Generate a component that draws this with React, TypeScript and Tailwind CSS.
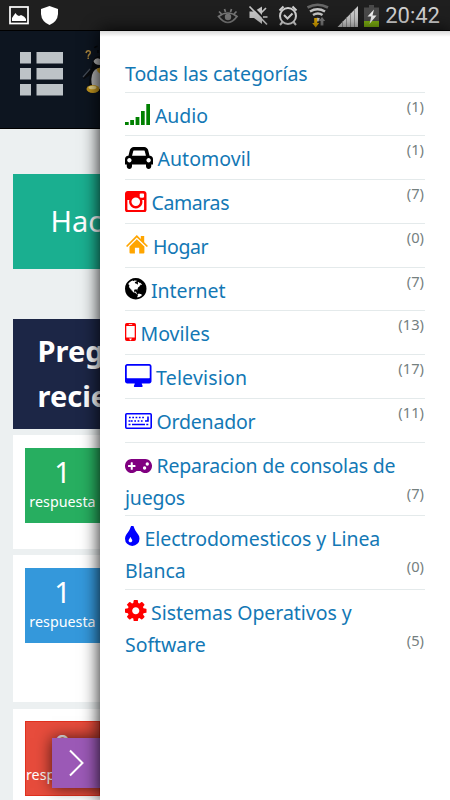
import React from 'react';
import { FaGamepad } from 'react-icons/fa';

interface Category {
  name: string;
  count: number;
  icon: React.ReactNode;
  tall?: boolean;
  tracking: string;
}

const SignalIcon = () => (
  <svg viewBox="0 0 25 21" className="mr-[5px] inline h-[21px] w-[25px] align-[-2px] text-[#008000]" fill="currentColor">
    <path d="M0 18h3.7v3H0zM5.2 16h3.8v5H5.2zM10.6 13h3.8v8h-3.8zM16 7h3.7v14H16zM21.3 0H25v21h-3.7z" />
  </svg>
);

const CarIcon = () => (
  <svg viewBox="0 128 2048 1600" className="mr-[4.5px] inline h-[22px] w-[28px] align-[-3px] text-black" fill="currentColor">
    <path d="M480 1088q0-66-47-113t-113-47-113 47-47 113 47 113 113 47 113-47 47-113zm36-320h1016l-89-357q-2-8-14-17.5t-21-9.5h-768q-9 0-21 9.5t-14 17.5zm1372 320q0-66-47-113t-113-47-113 47-47 113 47 113 113 47 113-47 47-113zm160-96v384q0 14-9 23t-23 9h-96v128q0 80-56 136t-136 56-136-56-56-136v-128h-1024v128q0 80-56 136t-136 56-136-56-56-136v-128h-96q-14 0-23-9t-9-23v-384q0-93 65.5-158.5t158.5-65.5h28l105-419q23-94 104-157.5t179-63.5h768q98 0 179 63.5t104 157.5l105 419h28q93 0 158.5 65.5t65.5 158.5z" />
  </svg>
);

const CameraIcon = () => (
  <svg viewBox="128 128 1536 1536" className="mr-[5px] inline h-[21.5px] w-[21.5px] align-[-2px] text-[#ff0000]" fill="currentColor">
    <path d="M1490 1426v-648h-135q20 63 20 131 0 126-64 232.5t-174 168.5-240 62q-197 0-337-135.5t-140-327.5q0-68 20-131h-141v648q0 26 17.5 43.5t43.5 17.5h1069q25 0 43-17.5t18-43.5zm-284-533q0-124-90.5-211.5t-218.5-87.5q-127 0-217.5 87.5t-90.5 211.5 90.5 211.5 217.5 87.5q128 0 218.5-87.5t90.5-211.5zm284-360v-165q0-28-20-48.5t-49-20.5h-174q-29 0-49 20.5t-20 48.5v165q0 29 20 49t49 20h174q29 0 49-20t20-49zm174-208v1142q0 81-58 139t-139 58h-1142q-81 0-139-58t-58-139v-1142q0-81 58-139t139-58h1142q81 0 139 58t58 139z" />
  </svg>
);

const HomeIcon = () => (
  <svg viewBox="0 0 23 19" className="mr-[5px] inline h-[19px] w-[23px] align-baseline text-[#ffa500]" fill="currentColor">
    <path d="M11.8 0L15.8 3.9V1h3.4v6.2L23 10.9l-1.2 1.2-10-9.7-9.6 9.7L1 10.9z" />
    <path d="M11.8 4.2l7.6 7.4v6q0 1-1 1h-4.2v-5.9h-4.3v5.9H5.5q-1 0-1-1v-6z" />
  </svg>
);

const GlobeIcon = () => (
  <svg viewBox="128 128 1536 1536" className="mr-[4.5px] inline h-[21.5px] w-[21.5px] align-[-2px] text-black" fill="currentColor">
    <path d="M896 128q209 0 385.5 103t279.5 279.5 103 385.5-103 385.5-279.5 279.5-385.5 103-385.5-103-279.5-279.5-103-385.5 103-385.5 279.5-279.5 385.5-103zm274 521q-2 1-9.5 9.5t-13.5 9.5q2 0 4.5-5t5-11 3.5-7q6-7 22-15 14-6 52-12 34-8 51 11-2-2 9.5-13t14.5-12q3-2 15-4.5t15-7.5l2-22q-12 1-17.5-7t-6.5-21q0 2-6 8 0-7-4.5-8t-11.5 1-9 1q-10-3-15-7.5t-8-16.5-4-15q-2-5-9.5-11t-9.5-10q-1-2-2.5-5.5t-3-6.5-4-5.5-5.5-2.5-7 5-7.5 10-4.5 5q-3-2-6-1.5t-4.5 1-4.5 3-5 3.500q-3 2-8.500 3t-8.500 2q15-5-1-11-10-4-16-3 9-4 7.500-12t-8.500-14h5q-1-4-8.500-8.500t-17.500-8.500-13-6q-8-5-34-9.500t-33-.5q-5 6-4.500 10.500t4 14 3.500 12.500q1 6-5.500 13t-6.500 12q0 7 14 15.500t10 21.500q-3 8-16 16t-16 12q-5 8-1.500 18.500t10.500 16.500q2 2 1.500 4t-3.500 4.500-5.500 4-6.500 3.500l-3 2q-11 5-20.500-6t-13.500-26q-7-25-16-30-23-8-29 1-5-13-41-26-25-9-58-4 6-1 0-15-7-15-19-12 3-6 4-17.500t1-13.500q3-13 12-23 1-1 7-8.500t9.500-13.500.5-6q35 4 50-11 5-5 11.500-17t10.500-17q9-6 14-5.500t14.500 5.500 14.500 5q14 1 15.500-11t-7.500-20q12 1 3-17-4-7-8-9-12-4-27 5-8 4 2 8-1-1-9.500 10.500t-16.500 17.500-16-5q-1-1-5.500-13.500t-9.500-13.500q-8 0-16 15 3-8-11-15t-24-8q19-12-8-27-7-4-20.500-5t-19.500 4q-5 7-5.500 11.500t5 8 10.500 5.500 11.500 4 8.500 3q14 10 8 14-2 1-8.500 3.500t-11.500 4.500-6 4q-3 4 0 14t-2 14q-5-5-9-17.500t-7-16.500q7 9-25 6l-10-1q-4 0-16 2t-20.500 1-13.500-8q-4-8 0-20 1-4 4-2-4-3-11-9.500t-10-8.500q-46 15-94 41 6 1 12-1 5-2 13-6.500t10-5.500q34-14 42-7l5-5q14 16 20 25-7-4-30-1-20 6-22 12 7 12 5 18-4-3-11.500-10t-14.500-11-15-5q-16 0-22 1-146 80-235 222 7 7 12 8 4 1 5 9t2.500 11 11.500-3q9 8 3 19 1-1 44 27 19 17 21 21 3 11-10 18-1-2-9-9t-9-4q-3 5 .5 18.500t10.500 12.500q-7 0-9.500 16t-2.500 35.500-1 23.500l2 1q-3 12 5.500 34.500t21.500 19.500q-13 3 20 43 6 8 8 9 3 2 12 7.500t15 10 10 10.500q4 5 10 22.500t14 23.500q-2 6 9.500 20t10.500 23q-1 0-2.500 1t-2.500 1q3 7 15.500 14t15.500 13q1 3 2 10t3 11 8 2q2-20-24-62-15-25-17-29-3-5-5.500-15.500t-4.500-14.500q2 0 6 1.500t8.500 3.500 7.500 4 2 3q-3 7 2 17.500t12 18.500 17 19 12 13q6 6 14 19.500t0 13.500q9 0 20 10.500t17 19.500q5 8 8 26t5 24q2 7 8.500 13.500t12.500 9.500l16 8 13 7q5 2 18.500 10.500t21.500 11.500q10 4 16 4t14.500-2.500 13.500-3.500q15-2 29 15t21 21q36 19 55 11-2 1 .5 7.500t8 15.500 9 14.500 5.500 8.500q5 6 18 15t18 15q6-4 7-9-3 8 7 20t18 10q14-3 14-32-31 15-49-18 0-1-2.500-5.500t-4-8.500-2.500-8.500 0-7.500 5-3q9 0 10-3.500t-2-12.500-4-13q-1-8-11-20t-12-15q-5 9-16 8t-16-9q0 1-1.500 5.500t-1.500 6.500q-13 0-15-1 1-3 2.500-17.500t3.500-22.500q1-4 5.500-12t7.500-14.500 4-12.500-4.500-9.500-17.500-2.500q-19 1-26 20-1 3-3 10.500t-5 11.500-9 7q-7 3-24 2t-24-5q-13-8-22.500-29t-9.500-37q0-10 2.500-26.500t3-25-5.500-24.500q3-2 9-9.500t10-10.500q2-1 4.500-1.500t4.500 0 4-1.500 3-6q-1-1-4-3-3-3-4-3 7 3 28.500-1.500t27.500 1.500q15 11 22-2 0-1-2.500-9.500t-.5-13.500q5 27 29 9 3 3 15.500 5t17.500 5q3 2 7 5.500t5.500 4.500 5-.5 8.500-6.500q10 14 12 24 11 40 19 44 7 3 11 2t4.500-9.500 0-14-1.500-12.500l-1-8v-18l-1-8q-15-3-18.500-12t1.500-18.500 15-18.500q1-1 8-3.500t15.500-6.500 12.500-8q21-19 15-35 7 0 11-9-1 0-5-3t-7.500-5-4.500-2q9-5 2-16 5-3 7.500-11t7.500-10q9 12 21 2 8-8 1-16 5-7 20.500-10.500t18.500-9.500q7 2 8-2t1-12 3-12q4-5 15-9t13-5l17-11q3-4 0-4 18 2 31-11 10-11-6-20 3-6-3-9.500t-15-5.500q3-1 11.500-.5t10.500-1.500q15-10-7-16-17-5-43 12zm-163 877q206-36 351-189-3-3-12.500-4.500t-12.500-3.500q-18-7-24-8 1-7-2.500-13t-8-9-12.500-8-11-7q-2-2-7-6t-7-5.500-7.500-4.500-8.500-2-10 1l-3 1q-3 1-5.500 2.500t-5.500 3-4 3 0 2.500q-21-17-36-22-5-1-11-5.500t-10.500-7-10-1.500-11.500 7q-5 5-6 15t-2 13q-7-5 0-17.500t2-18.500q-3-6-10.500-4.500t-12 4.500-11.500 8.500-9 6.500-8.500 5.500-8.500 7.500q-3 4-6 12t-5 11q-2-4-11.500-6.500t-9.500-5.500q2 10 4 35t5 38q7 31-12 48-27 25-29 40-4 22 12 26 0 7-8 20.500t-7 21.500q0 6 2 16z" />
  </svg>
);

const MobileIcon = () => (
  <svg viewBox="0 0 11 18" className="mr-[4.5px] inline h-[18px] w-[11px] align-baseline text-[#ff0000]" fill="currentColor" fillRule="evenodd">
    <path d="M1.8 0h7.4Q11 0 11 1.8v14.4Q11 18 9.2 18H1.8Q0 18 0 16.2V1.8Q0 0 1.8 0zM1.3 3v11.6h8.4V3zM3.8 1.2v.8h3.4v-.8zM4.3 15.6v1h.7v.7h1v-.7h.7v-1z" />
  </svg>
);

const DesktopIcon = () => (
  <svg viewBox="-64 0 1920 1664" className="mr-[4.5px] inline h-[23px] w-[26.5px] align-[-2px] text-[#0000ff]" fill="currentColor">
    <path d="M1728 992v-832q0-13-9.5-22.5t-22.5-9.5h-1600q-13 0-22.5 9.5t-9.5 22.5v832q0 13 9.5 22.5t22.5 9.5h1600q13 0 22.5-9.5t9.5-22.5zm128-832v1088q0 66-47 113t-113 47h-544q0 37 16 77.5t32 71 16 43.5q0 26-19 45t-45 19h-512q-26 0-45-19t-19-45q0-14 16-44t32-70 16-78h-544q-66 0-113-47t-47-113v-1088q0-66 47-113t113-47h1600q66 0 113 47t47 113z" />
  </svg>
);

const KeyboardIcon = () => (
  <svg viewBox="0 0 27 16" className="mr-[4.5px] inline h-[16px] w-[27px] align-baseline text-[#0000ff]" fill="none" stroke="currentColor">
    <rect x="0.8" y="0.8" width="25.4" height="14.4" rx="1" strokeWidth="1.6" />
    <path d="M4 4.5h16.5M6 8h13" strokeWidth="1.6" strokeDasharray="1.7 1.6" />
    <path d="M3.5 8h2M20 8h3V3.6M3.5 11.5h2M7 11.5h13M21.3 11.5h2" strokeWidth="1.6" />
  </svg>
);

const GamepadIcon = () => (
  <FaGamepad viewBox="0 96 640 320" preserveAspectRatio="none" className="mr-[4.5px] inline h-[14px] w-[27px] align-baseline text-[#800080]" />
);

const TintIcon = () => (
  <svg viewBox="384 128 1024 1408" className="mr-[5px] inline h-[20px] w-[14.5px] align-baseline text-[#0000ff]" fill="currentColor">
    <path d="M896 1152q0-36-20-69-1-1-15.5-22.5t-25.5-38-25-44-21-50.5q-4-16-21-16t-21 16q-7 23-21 50.5t-25 44-25.5 38-15.5 22.5q-20 33-20 69 0 53 37.5 90.5t90.5 37.5 90.5-37.5 37.5-90.5zm512-128q0 212-150 362t-362 150-362-150-150-362q0-145 81-275 6-9 62.5-90.5t101-151 99.5-178 83-201.5q9-30 34-47t51-17 51.5 17 33.5 47q28 93 83 201.5t99.5 178 101 151 62.5 90.5q81 127 81 275z" />
  </svg>
);

const CogIcon = () => (
  <svg viewBox="128 128 1536 1536" className="mr-[4.5px] inline h-[21.5px] w-[21.5px] align-[-1.5px] text-[#ff0000]" fill="currentColor">
    <path d="M1152 896q0-106-75-181t-181-75-181 75-75 181 75 181 181 75 181-75 75-181zm512-109v222q0 12-8 23t-20 13l-185 28q-19 54-39 91 35 50 107 138 10 12 10 25t-9 23q-27 37-99 108t-94 71q-12 0-26-9l-138-108q-44 23-91 38-16 136-29 186-7 28-36 28h-222q-14 0-24.5-8.5t-11.5-21.5l-28-184q-49-16-90-37l-141 107q-10 9-25 9-14 0-25-11-126-114-165-168-7-10-7-23 0-12 8-23 15-21 51-66.5t54-70.5q-27-50-41-99l-183-27q-13-2-21-12.5t-8-23.5v-222q0-12 8-23t19-13l186-28q14-46 39-92-40-57-107-138-10-12-10-24 0-10 9-23 26-36 98.5-107.5t94.5-71.5q13 0 26 10l138 107q44-23 91-38 16-136 29-186 7-28 36-28h222q14 0 24.5 8.5t11.5 21.5l28 184q49 16 90 37l142-107q9-9 24-9 13 0 25 10 129 119 165 170 7 8 7 22 0 12-8 23-15 21-51 66.5t-54 70.5q26 50 41 98l183 28q13 2 21 12.5t8 23.5z" />
  </svg>
);

const categories: Category[] = [
  { name: 'Audio', count: 1, icon: <SignalIcon />, tracking: 'tracking-[-0.1px]' },
  { name: 'Automovil', count: 1, icon: <CarIcon />, tracking: 'tracking-[0.05px]' },
  { name: 'Camaras', count: 7, icon: <CameraIcon />, tracking: 'tracking-[-0.4px]' },
  { name: 'Hogar', count: 0, icon: <HomeIcon />, tracking: 'tracking-[-0.4px]' },
  { name: 'Internet', count: 7, icon: <GlobeIcon />, tracking: 'tracking-[-0.05px]' },
  { name: 'Moviles', count: 13, icon: <MobileIcon />, tracking: 'tracking-normal' },
  { name: 'Television', count: 17, icon: <DesktopIcon />, tracking: 'tracking-[0.2px]' },
  { name: 'Ordenador', count: 11, icon: <KeyboardIcon />, tracking: 'tracking-[-0.2px]' },
  { name: 'Reparacion de consolas de juegos', count: 7, icon: <GamepadIcon />, tall: true, tracking: 'tracking-[-0.2px]' },
  { name: 'Electrodomesticos y Linea Blanca', count: 0, icon: <TintIcon />, tall: true, tracking: 'tracking-[-0.05px]' },
  { name: 'Sistemas Operativos y Software', count: 5, icon: <CogIcon />, tall: true, tracking: 'tracking-[-0.05px]' },
];

const StatusBar = () => (
  <div className="flex h-[31px] shrink-0 items-center justify-between border-b border-black bg-[#1f1f1f] pl-[9px] pr-[10px]">
    <svg width="50" height="30" viewBox="9 0 50 30">
      <rect x="10" y="7" width="18" height="16.5" fill="none" stroke="#fff" strokeWidth="1.7" />
      <path d="M12 21v-3l2-3 1.5-2 1.5 2 2 1 2-1 2 1 1.500 1 1.500 2v2z" fill="#fff" />
      <path d="M49.5 6l8.5 3v5q-.5 7.500-8.500 11-8-3.500-8.500-11V9z" fill="#fff" />
    </svg>
    <div className="flex items-center">
      <svg width="168" height="30" viewBox="216 0 168 30">
        <g fill="none" stroke="#777" strokeWidth="1.7">
          <path d="M217.500 16.500q9.500-7 18.500 0-9 12-18.500 0z" />
          <path d="M218 11.500l2.500 2.500M223.500 9l1 3M230.500 9l-1 3M235.500 11.500l-2.500 2.500" />
        </g>
        <circle cx="227" cy="17" r="3.200" fill="#777" />
        <path d="M248.500 11.500h4.500l8-5v17.500l-8-6h-4.500z" fill="#c4c4c4" />
        <path d="M250 5.500L268 23.500" stroke="#1f1f1f" strokeWidth="2" />
        <path d="M248.500 6.500l17.500 18M260 13l5-5M262 17h4.500" stroke="#c4c4c4" strokeWidth="1.700" />
        <g fill="none" stroke="#d0d0d0" strokeWidth="2">
          <circle cx="287" cy="16" r="8" />
          <path d="M283 15l3.500 3.500 5-5M278.500 10.500l4-4M295.500 10.500l-4-4M281.500 22l-2.500 3M292.500 22l2.500 3" />
        </g>
        <g fill="none" strokeWidth="2.600">
          <path d="M306.500 7.500q10-5.500 20.500 0" stroke="#666" />
          <path d="M309 11.500q7.500-4.500 15 0M312 15q5-3 9.500 0" stroke="#c4c4c4" />
        </g>
        <path d="M314 18.500q2.500-1.500 5 0L317 22z" fill="#c4c4c4" />
        <path d="M313.200 18h3v5h2l-3.500 4.500-3.500-4.500h2z" fill="#d9a400" />
        <path d="M321 17l3.200 4h-1.800v4.500h-2.800V21h-1.800z" fill="#777" />
        <path d="M336.500 27L357 6v21z" fill="#c8c8c8" />
        <path d="M341.500 21v6M345.500 17v10M349.500 13v14M353.500 9v18" stroke="#777" strokeWidth=".7" />
        <path d="M368 5h5v2.500h5V27h-15V7.500h5z" fill="#4a4a4a" />
        <path d="M363 21h15v6h-15z" fill="#7cae10" />
        <path d="M373 9.500l-6.500 7h3.800l-1.800 7.500 7-8.500h-4z" fill="#f0f0f0" />
      </svg>
      <span className="pt-px font-['Roboto',sans-serif] text-[22px] leading-[30px] text-[#d0d0d0]">20:42</span>
    </div>
  </div>
);

const Header = () => (
  <div className="flex h-[98px] shrink-0 items-start border-b border-black bg-[#0d1520] pl-5">
    <svg width="44" height="46" viewBox="0 0 44 46" className="mt-5 shrink-0" fill="#bdc3c7">
      <path d="M0 1h11v11.500H0zM16.500 1H43v11.500H16.500zM0 17h11v11.500H0zM16.500 17H43v11.500H16.500zM0 33h11v11.500H0zM16.500 33H43v11.500H16.500z" />
    </svg>
    <svg width="18" height="50" viewBox="82 45 18 50" className="ml-[18px] mt-[14px] shrink-0">
      <path d="M86 53q.5-2.500 2.500-2.300 2.500.5 1.500 3-1.800 1.300-1.800 3M88.200 57.500v1.500" fill="none" stroke="#a8843c" strokeWidth="1.500" />
      <path d="M94.500 48q1-2 3-1.500M98 50v3" stroke="#050608" strokeWidth="1.500" fill="none" />
      <path d="M100 56q-6 0-7.500 6l-1 6-8 9q-1 2 .5 2l6-4q-1 7-1 12l4 5h7z" fill="#090b0e" />
      <path d="M83 77l7-8" stroke="#444b55" strokeWidth="1.200" />
      <path d="M100 68q-6 0-8 7-2 8 2 14h6z" fill="#b4b4b4" />
      <path d="M100 59q-4-2-6.500 2 1 4 6.500 4z" fill="#b9b9b9" />
      <path d="M96.500 69l3.500-1.500v6q-2.500-1-3.500-4.500z" fill="#c99a1c" />
      <ellipse cx="93" cy="89" rx="6.500" ry="4" fill="#c4971e" />
      <ellipse cx="92.500" cy="87.500" rx="4" ry="1.800" fill="#e8d488" />
    </svg>
  </div>
);

const AnswerBox = ({ value, label }: { value: string; label: string }) => (
  <>
    <span className="text-[29px] leading-[34px]">{value}</span>
    <span className="pt-[3px] text-[14.3px] leading-5">{label}</span>
  </>
);

const CategoryRow = ({ name, count, icon, tall, tracking }: Category) => (
  <li className={tall ? 'flex h-[73.6px] border-t border-[#e4eaeb] pt-[7px]' : 'flex h-[43.75px] border-t border-[#e4eaeb] pt-[7px]'}>
    <a className={`flex-1 ${tracking}`}>
      {icon}
      {name}
    </a>
    <span className={tall ? 'shrink-0 self-end pb-[12.5px] pr-px text-[14.7px] leading-5 text-[#75807f]' : 'mt-[-4px] shrink-0 pr-px text-[14.7px] leading-5 text-[#75807f]'}>
      ({count})
    </span>
  </li>
);

const App = () => {
  return (
    <div className="flex h-[800px] w-[450px] flex-col overflow-hidden bg-[#ecf0f1] font-['Noto_Sans',sans-serif]">
      <StatusBar />
      <div className="flex h-[769px]">
        <div className="relative flex h-full w-[100px] shrink-0 flex-col overflow-hidden">
          <Header />
          <div className="ml-[12.5px] mt-[45px] h-[95px] shrink-0 overflow-hidden whitespace-nowrap bg-[#1aaf90] pl-[38px] text-[29px] leading-[93px] text-white">
            Hac
          </div>
          <div className="ml-[12.5px] mt-[50px] h-[110px] shrink-0 bg-[#1c2646] pl-[25px] pt-[8.5px] text-[29px] font-bold leading-[45px] text-white">
            <div>Preg</div>
            <div>recie</div>
          </div>
          <div className="ml-[12.5px] mt-[6px] h-[114px] shrink-0 bg-white pl-[12.5px] pt-[12.5px]">
            <div className="flex h-[75px] w-[75px] flex-col items-center bg-[#27ae60] pt-[7px] text-white">
              <AnswerBox value="1" label="respuesta" />
            </div>
          </div>
          <div className="ml-[12.5px] mt-[6px] h-[147px] shrink-0 bg-white pl-[12.5px] pt-[13px]">
            <div className="flex h-[75px] w-[75px] flex-col items-center bg-[#3498db] pt-[7px] text-white">
              <AnswerBox value="1" label="respuesta" />
            </div>
          </div>
          <div className="ml-[12.5px] mt-[7px] h-[100px] shrink-0 bg-white pl-[12.5px] pt-[12px]">
            <div className="flex h-[75px] w-[75px] flex-col items-center border border-[#e0301e] bg-[#e74c3c] pt-[6px] text-white">
              <AnswerBox value="0" label="respuestas" />
            </div>
          </div>
          <button className="absolute left-[52px] top-[707px] flex h-[50px] w-[50px] items-center bg-[#9b59b6] pl-[17px] shadow-[0_0_15px_rgba(0,0,0,0.7)]">
            <svg width="16" height="28" viewBox="0 0 16 28" fill="none" stroke="#fff" strokeWidth="2">
              <path d="M1 1.500L13.500 14 1 26.500" />
            </svg>
          </button>
        </div>
        <div className="relative h-full w-[350px] bg-white px-[25px] pt-[27px] text-[19.5px] leading-8 text-[#1378b5] shadow-[0_0_17px_rgba(0,0,0,0.95)]">
          <div className="absolute inset-x-0 top-0 h-[6px] bg-gradient-to-b from-black/15 to-transparent" />
          <a className="block h-[33.5px] tracking-[-0.1px]">Todas las categorías</a>
          <ul>
            {categories.map((category) => (
              <CategoryRow key={category.name} {...category} />
            ))}
          </ul>
        </div>
      </div>
    </div>
  );
};

export default App;
